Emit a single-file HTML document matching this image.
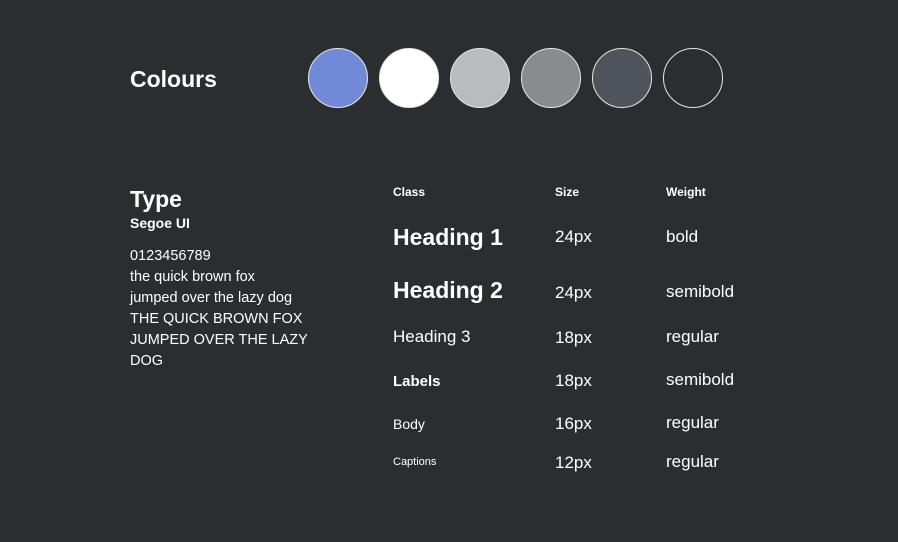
<!DOCTYPE html>
<html><head><style>
body{margin:0;width:898px;height:542px;background:#2b2d31;color:#fff;font-family:"Liberation Sans",sans-serif;position:relative;overflow:hidden}
.a{position:absolute;white-space:nowrap;line-height:1}
.c{position:absolute;top:48px;width:58px;height:58px;border-radius:50%;border:1px solid #e6e6e6}
</style></head><body>
<div class="a" style="left:130px;top:68px;font-size:23px;font-weight:bold">Colours</div>
<div class="c" style="left:308px;background:#7289da"></div>
<div class="c" style="left:379px;background:#fff"></div>
<div class="c" style="left:450px;background:#b9bbbe"></div>
<div class="c" style="left:521px;background:#898b8f"></div>
<div class="c" style="left:592px;background:#4f545c"></div>
<div class="c" style="left:663px;background:#2b2d31"></div>

<div class="a" style="left:130px;top:188px;font-size:23px;font-weight:bold">Type</div>
<div class="a" style="left:130px;top:216px;font-size:14px;font-weight:bold">Segoe UI</div>
<div class="a" style="left:130px;top:249px;font-size:14.5px">0123456789</div>
<div class="a" style="left:130px;top:270px;font-size:14.5px">the quick brown fox</div>
<div class="a" style="left:130px;top:291px;font-size:14.5px">jumped over the lazy dog</div>
<div class="a" style="left:130px;top:312px;font-size:14.5px">THE QUICK BROWN FOX</div>
<div class="a" style="left:130px;top:333px;font-size:14.5px">JUMPED OVER THE LAZY</div>
<div class="a" style="left:130px;top:354px;font-size:14.5px">DOG</div>

<div class="a" style="left:393px;top:186px;font-size:12px;font-weight:bold">Class</div>
<div class="a" style="left:555px;top:186px;font-size:12px;font-weight:bold">Size</div>
<div class="a" style="left:666px;top:186px;font-size:12px;font-weight:bold">Weight</div>

<div class="a" style="left:393px;top:226px;font-size:23px;font-weight:bold">Heading 1</div>
<div class="a" style="left:393px;top:279px;font-size:23px;font-weight:bold">Heading 2</div>
<div class="a" style="left:393px;top:328px;font-size:17px">Heading 3</div>
<div class="a" style="left:393px;top:374px;font-size:15px;font-weight:bold">Labels</div>
<div class="a" style="left:393px;top:417px;font-size:14px">Body</div>
<div class="a" style="left:393px;top:457px;font-size:11px">Captions</div>

<div class="a" style="left:555px;top:228px;font-size:17px">24px</div>
<div class="a" style="left:555px;top:284px;font-size:17px">24px</div>
<div class="a" style="left:555px;top:329px;font-size:17px">18px</div>
<div class="a" style="left:555px;top:372px;font-size:17px">18px</div>
<div class="a" style="left:555px;top:415px;font-size:17px">16px</div>
<div class="a" style="left:555px;top:454px;font-size:17px">12px</div>

<div class="a" style="left:666px;top:228px;font-size:17px">bold</div>
<div class="a" style="left:666px;top:283px;font-size:17px">semibold</div>
<div class="a" style="left:666px;top:328px;font-size:17px">regular</div>
<div class="a" style="left:666px;top:371px;font-size:17px">semibold</div>
<div class="a" style="left:666px;top:414px;font-size:17px">regular</div>
<div class="a" style="left:666px;top:453px;font-size:17px">regular</div>
</body></html>
